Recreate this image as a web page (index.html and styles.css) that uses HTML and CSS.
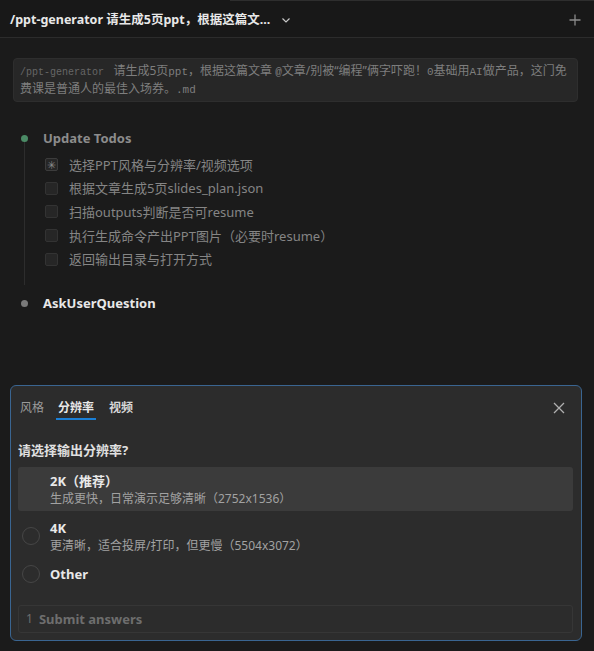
FILE: index.html
```html
<!DOCTYPE html>
<html lang="zh">
<head>
<meta charset="utf-8">
<link rel="stylesheet" href="styles.css">
</head>
<body>
<div class="app">
  <div class="topline"></div>
  <header class="header">
    <div class="title">/ppt-generator 请生成5页ppt，根据这篇文...</div>
    <svg class="chev" width="12" height="12" viewBox="0 0 12 12"><path d="M2.5 4.5 L6 8 L9.5 4.5" fill="none" stroke="#c8c8c8" stroke-width="1.2"/></svg>
    <svg class="plus" width="14" height="14" viewBox="0 0 14 14"><path d="M7 1.5 V12.5 M1.5 7 H12.5" stroke="#8a8a8a" stroke-width="1.3"/></svg>
  </header>
  <main class="main">
    <div class="prompt">
      <div class="pline"><span class="mono">/ppt-generator</span><span class="t">&nbsp;&nbsp; 请生成5页</span><span class="mono2">ppt</span><span class="t">，根据这篇文章 </span><span class="mono2">@</span><span class="t">文章/别被“编程”俩字吓跑！</span><span class="mono2">0</span><span class="t">基础用</span><span class="mono2">AI</span><span class="t">做产品，这门免</span></div>
      <div class="pline"><span class="t">费课是普通人的最佳入场券。</span><span class="mono2">.md</span></div>
    </div>

    <div class="timeline">
      <div class="step">
        <span class="dot green"></span>
        <div class="step-title dim">Update Todos</div>
        <ul class="todos">
          <li><span class="box active">✳</span>选择PPT风格与分辨率/视频选项</li>
          <li><span class="box"></span>根据文章生成5页slides_plan.json</li>
          <li><span class="box"></span>扫描outputs判断是否可resume</li>
          <li><span class="box"></span>执行生成命令产出PPT图片（必要时resume）</li>
          <li><span class="box"></span>返回输出目录与打开方式</li>
        </ul>
      </div>
      <div class="step last">
        <span class="dot gray"></span>
        <div class="step-title bright">AskUserQuestion</div>
      </div>
    </div>

    <section class="panel">
      <div class="tabs">
        <span class="tab">风格</span>
        <span class="tab active">分辨率</span>
        <span class="tab bold">视频</span>
        <svg class="close" width="12" height="12" viewBox="0 0 12 12"><path d="M1 1 L11 11 M11 1 L1 11" stroke="#b0b0b0" stroke-width="1.3"/></svg>
      </div>
      <div class="question">请选择输出分辨率?</div>
      <div class="options">
        <div class="option selected">
          <span class="radio hidden"></span>
          <div class="opt-text">
            <div class="opt-title">2K（推荐）</div>
            <div class="opt-desc">生成更快，日常演示足够清晰（2752x1536）</div>
          </div>
        </div>
        <div class="option">
          <span class="radio"></span>
          <div class="opt-text">
            <div class="opt-title">4K</div>
            <div class="opt-desc">更清晰，适合投屏/打印，但更慢（5504x3072）</div>
          </div>
        </div>
        <div class="option single">
          <span class="radio"></span>
          <div class="opt-text">
            <div class="opt-title">Other</div>
          </div>
        </div>
      </div>
      <div class="submit"><span class="num">1</span><span>Submit answers</span></div>
    </section>
  </main>
</div>
</body>
</html>
```
FILE: styles.css
```css
* { box-sizing: border-box; }
html, body { margin: 0; padding: 0; }
body {
  background: #1b1b1b;
  font-family: "Noto Sans", "Noto Sans CJK SC", sans-serif;
  color: #cccccc;
  width: 594px;
  height: 651px;
  overflow: hidden;
}
.app { position: relative; height: 651px; }
.topline {
  position: absolute; top: 0; left: 230px; right: 0; height: 1px; background: #2e2e2e;
}
.header {
  height: 38px;
  background: #181818;
  border-bottom: 1px solid #2c2c2c;
  display: flex;
  align-items: center;
  padding: 2px 12px 0 10px;
}
.title {
  font-size: 12.5px;
  font-weight: 700;
  color: #e8e8e8;
  line-height: 18px;
  padding-top: 1px;
}
.chev { margin-left: 10px; }
.plus { margin-left: auto; }

.main { padding: 20px 16px 0 13px; }
.prompt {
  background: #272727;
  border: 1px solid #2e2e2e;
  border-radius: 4px;
  padding: 3px 6px 3px 6px;
  font-size: 12px;
  line-height: 18px;
  height: 44px;
  color: #7e7e7e;
  width: 565px;
}
.pline { height: 18px; white-space: nowrap; }
.mono { font-family: "Liberation Mono", "DejaVu Sans Mono", monospace; font-size: 10px; color: #666666; }
.mono2 { font-family: "Liberation Mono", monospace; font-size: 11px; }

.timeline { margin-top: 26px; margin-left: 8px; }
.step { position: relative; padding-left: 22px; }
.step .dot {
  position: absolute; left: 0; top: 7px; width: 7px; height: 7px; border-radius: 50%;
}
.step:not(.last)::before {
  content: ""; position: absolute; left: 3px; top: 14px; bottom: -14px; width: 1px; background: #2d2d2d;
}
.dot.green { background: #4b8b66; }
.dot.gray { background: #7a7a7a; }
.step-title { font-size: 13px; font-weight: 700; line-height: 20px; }
.step-title.dim { color: #8c8c8c; }
.step-title.bright { color: #e8e8e8; }
.todos { list-style: none; margin: 5px 0 0 2px; padding: 0; }
.todos li {
  display: flex; align-items: center; gap: 11px;
  font-size: 13px; line-height: 20px; height: 23.6px; color: #858585;
}
.box {
  width: 13px; height: 13px; border: 1px solid #333333; background: #262626; border-radius: 2px;
  display: inline-flex; align-items: center; justify-content: center;
  font-size: 11px; color: #8a8a8a; line-height: 1;
}
.box.active { border-color: #3c3c3c; }
.step.last { margin-top: 22px; }

.panel {
  margin-top: 72px;
  margin-left: -3px;
  width: 572px;
  height: 256px;
  background: #2c2c2c;
  border: 1px solid #3a6591;
  border-radius: 6px;
  padding: 0 8px 0 7px;
}
.tabs {
  display: flex; align-items: flex-start; height: 36px; padding: 12px 0 0 2px; position: relative;
  gap: 14px;
}
.tab { font-size: 12px; color: #9a9a9a; line-height: 20px; }
.tab.active {
  color: #e8e8e8; font-weight: 700; border-bottom: 2px solid #1a7fd6; height: 22px;
  padding: 0 2px; margin: 0 -1px 0 -2px;
}
.tab.bold { color: #d8d8d8; font-weight: 700; }
.close { position: absolute; right: 8px; top: 16px; }
.question { font-size: 13px; font-weight: 700; color: #e0e0e0; margin-top: 18px; line-height: 20px; }
.options { margin-top: 7px; display: flex; flex-direction: column; gap: 3px; }
.option {
  display: flex; align-items: center; gap: 10px;
  padding: 5px 4px 4px 4px; border-radius: 3px; min-height: 44px;
}
.option.selected { background: #3b3b3b; }
.option.single { min-height: 26px; padding: 4px; }
.radio { width: 18px; height: 18px; border-radius: 50%; border: 1px solid #464646; flex: none; }
.radio.hidden { visibility: hidden; }
.opt-title { font-size: 13px; font-weight: 700; color: #e8e8e8; line-height: 18px; }
.opt-desc { font-size: 12px; color: #a2a2a2; line-height: 17px; }
.submit {
  margin-top: 18px;
  height: 28px;
  border: 1px solid #363636;
  border-radius: 3px;
  font-size: 13px;
  font-weight: 700;
  color: #6e6e6e;
  display: flex; align-items: center; padding-left: 7px;
}
.submit .num { font-weight: 400; margin-right: 6px; font-size: 12px; }
```
